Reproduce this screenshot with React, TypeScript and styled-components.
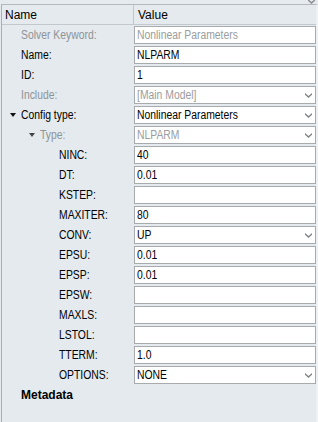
import React from 'react'
import styled, { createGlobalStyle } from 'styled-components'

type Field = {
  label: string
  value?: string
  level?: number
  disabled?: boolean
  select?: boolean
  expander?: boolean
}

const fields: Field[] = [
  { label: 'Solver Keyword:', value: 'Nonlinear Parameters', disabled: true },
  { label: 'Name:', value: 'NLPARM' },
  { label: 'ID:', value: '1' },
  { label: 'Include:', value: '[Main Model]', disabled: true, select: true },
  { label: 'Config type:', value: 'Nonlinear Parameters', select: true, expander: true },
  { label: 'Type:', value: 'NLPARM', level: 1, disabled: true, select: true, expander: true },
  { label: 'NINC:', value: '40', level: 2 },
  { label: 'DT:', value: '0.01', level: 2 },
  { label: 'KSTEP:', value: '', level: 2 },
  { label: 'MAXITER:', value: '80', level: 2 },
  { label: 'CONV:', value: 'UP', level: 2, select: true },
  { label: 'EPSU:', value: '0.01', level: 2 },
  { label: 'EPSP:', value: '0.01', level: 2 },
  { label: 'EPSW:', value: '', level: 2 },
  { label: 'MAXLS:', value: '', level: 2 },
  { label: 'LSTOL:', value: '', level: 2 },
  { label: 'TTERM:', value: '1.0', level: 2 },
  { label: 'OPTIONS:', value: 'NONE', level: 2, select: true },
]

const GlobalStyle = createGlobalStyle`
  body {
    margin: 0;
  }
`

const Panel = styled.div`
  width: 318px;
  height: 422px;
  display: flex;
  flex-direction: column;
  overflow: hidden;
  background: #e4eaee;
  font-family: 'Liberation Sans', Arial, sans-serif;
  font-size: 12px;
  color: #000;
`

const TopStrip = styled.div`
  height: 4px;
  display: flex;
  justify-content: flex-end;
  align-items: flex-end;
  padding-right: 3px;
  overflow: hidden;
`

const Frame = styled.div`
  flex: 1;
  margin-left: 1px;
  border-left: 1px solid #a9b0b5;
  border-top: 1px solid #b3b9bd;
  border-right: 2px solid #edf1f3;
`

const Header = styled.div`
  display: grid;
  grid-template-columns: 132px 1fr;
  height: 19px;
  border-bottom: 1px solid #c3c8cc;
`

const HeaderCell = styled.div<{ $first?: boolean }>`
  display: flex;
  align-items: center;
  padding-left: ${(p) => (p.$first ? 3 : 4)}px;
  border-right: ${(p) => (p.$first ? '1px solid #c3c8cc' : 'none')};
`

const Row = styled.div`
  display: grid;
  grid-template-columns: 132px 1fr;
  height: 20px;
  align-items: center;
`

const Label = styled.div<{ $level: number; $disabled?: boolean; $bold?: boolean }>`
  display: flex;
  align-items: center;
  padding-left: ${(p) => 19 + p.$level * 19}px;
  color: ${(p) => (p.$disabled ? '#8e9397' : '#000')};
  font-weight: ${(p) => (p.$bold ? 'bold' : 'normal')};
  position: relative;
`

// row texts are narrower than the header font in the original
const Text = styled.span`
  display: inline-block;
  white-space: nowrap;
  font-size: 12.5px;
  transform: scaleX(0.83);
  transform-origin: 0 50%;
`

const Expander = styled.span<{ $disabled?: boolean }>`
  position: absolute;
  margin-left: -11px;
  width: 0;
  height: 0;
  border-left: 3px solid transparent;
  border-right: 3px solid transparent;
  border-top: 4px solid ${(p) => (p.$disabled ? '#444' : '#111')};
`

const Box = styled.div<{ $disabled?: boolean }>`
  height: 18px;
  box-sizing: border-box;
  border: 1px solid #a7abae;
  background: #fff;
  display: flex;
  align-items: center;
  justify-content: space-between;
  padding: 0 3px 0 2px;
  color: ${(p) => (p.$disabled ? '#9a9c9e' : '#000')};
`

const Chevron: React.FC<{ color?: string }> = ({ color = '#808386' }) => (
  <svg width="7" height="5" viewBox="0 0 7 5">
    <path d="M0 0 L3.5 3 L7 0 L7 1.8 L3.5 5 L0 1.8 Z" fill={color} />
  </svg>
)

const App: React.FC = () => (
  <Panel>
    <GlobalStyle />
    <TopStrip>
      <Chevron color="#8a8d90" />
    </TopStrip>
    <Frame>
      <Header>
        <HeaderCell $first>Name</HeaderCell>
        <HeaderCell>Value</HeaderCell>
      </Header>
      {fields.map((f) => (
        <Row key={f.label}>
          <Label $level={f.level ?? 0} $disabled={f.disabled}>
            {f.expander && <Expander $disabled={f.disabled} />}
            <Text>{f.label}</Text>
          </Label>
          <Box $disabled={f.disabled}>
            <Text>{f.value}</Text>
            {f.select && <Chevron />}
          </Box>
        </Row>
      ))}
      <Row>
        <Label $level={0} $bold>
          Metadata
        </Label>
      </Row>
    </Frame>
  </Panel>
)

export default App
